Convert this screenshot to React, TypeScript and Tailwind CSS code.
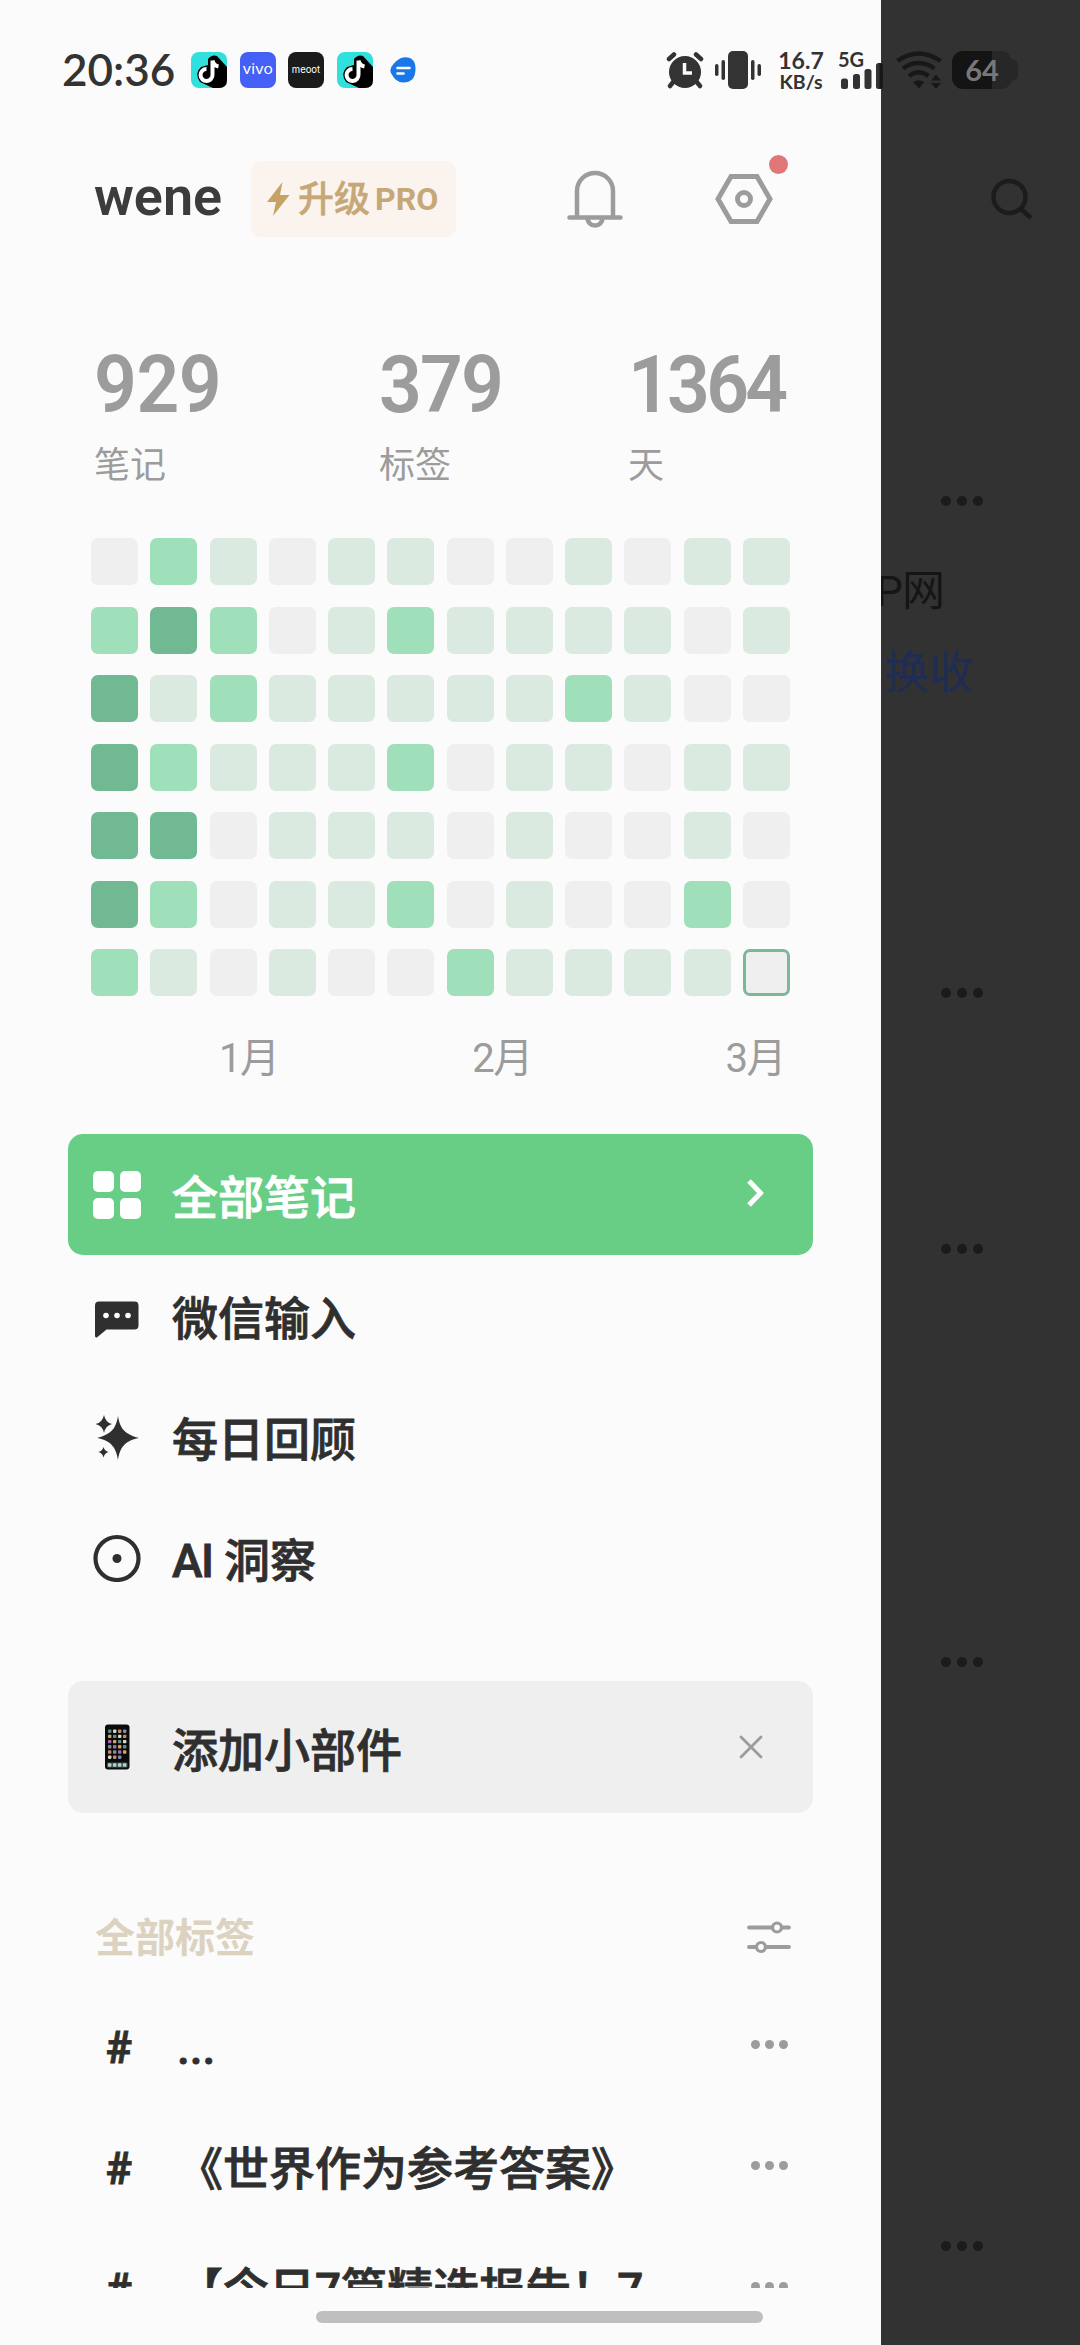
import type { ReactNode } from 'react';

// ── Data ──────────────────────────────────────────────────────────────

const STATS = [
  { value: '929', label: '笔记', className: 'w-[285px] tracking-[-0.5px]' },
  { value: '379', label: '标签', className: 'w-[249px] tracking-[-2px]' },
  { value: '1364', label: '天', className: 'tracking-[-4px]' },
];

// 0 = no notes, 3 = most notes, 4 = today
const HEATMAP = [
  [0, 2, 1, 0, 1, 1, 0, 0, 1, 0, 1, 1],
  [2, 3, 2, 0, 1, 2, 1, 1, 1, 1, 0, 1],
  [3, 1, 2, 1, 1, 1, 1, 1, 2, 1, 0, 0],
  [3, 2, 1, 1, 1, 2, 0, 1, 1, 0, 1, 1],
  [3, 3, 0, 1, 1, 1, 0, 1, 0, 0, 1, 0],
  [3, 2, 0, 1, 1, 2, 0, 1, 0, 0, 2, 0],
  [2, 1, 0, 1, 0, 0, 2, 1, 1, 1, 1, 4],
];

const LEVEL_CLASS = [
  'bg-[#efefef]',
  'bg-[#daeae0]',
  'bg-[#9fdfba]',
  'bg-[#71b993]',
  'bg-[#efefef] border-[3px] border-[#7fb699]',
];

const TAGS = ['...', '《世界作为参考答案》', '【今日7篇精选报告！7'];

// ── Icons ─────────────────────────────────────────────────────────────

function DouyinIcon() {
  return (
    <svg viewBox="0 0 36 36" className="h-9 w-9">
      <rect width="36" height="36" rx="8" fill="#2fe0dc" />
      <path d="M17 7 Q21 2 26 4 L36 15 V28 Q36 36 28 36 H22 L9 30 Q3 21 10 15 L17 13 Z" fill="#000" />
      <path
        d="M21.5 8.5 V22.5 A6 6 0 1 1 15.5 17 M21.5 8.5 Q22.5 13.5 27.5 14.5"
        fill="none"
        stroke="#fff"
        strokeWidth="4"
      />
    </svg>
  );
}

function AlarmIcon() {
  return (
    <svg viewBox="0 0 38 38" className="h-[38px] w-[38px]">
      <g stroke="#333" strokeWidth="4.5" strokeLinecap="round">
        <path d="M3 8 L8 3.500" />
        <path d="M35 8 L30 3.500" />
        <path d="M8 30 L4 35" />
        <path d="M30 30 L34 35" />
      </g>
      <circle cx="19" cy="21" r="16" fill="#333" />
      <path d="M18.500 12 V22 H26" fill="none" stroke="#fafafa" strokeWidth="3.500" />
    </svg>
  );
}

function VibrateIcon() {
  return (
    <svg viewBox="0 0 46 38" className="h-[38px] w-[46px]" fill="#333">
      <rect x="13" y="0" width="20" height="38" rx="5" />
      <rect x="6.500" y="9" width="3.500" height="20" rx="1.700" />
      <rect x="0" y="13" width="3.500" height="12" rx="1.700" />
      <rect x="36" y="9" width="3.500" height="20" rx="1.700" />
      <rect x="42.500" y="13" width="3.500" height="12" rx="1.700" />
    </svg>
  );
}

function SignalIcon() {
  return (
    <svg viewBox="0 0 42 26" className="h-[26px] w-[42px]" fill="#333">
      <rect x="0" y="15.500" width="7" height="10.500" rx="2.500" />
      <rect x="12" y="11" width="7" height="15" rx="2.500" />
      <rect x="23.500" y="6" width="7" height="20" rx="2.500" />
      <rect x="35" y="0" width="7" height="26" rx="2.500" />
      <path d="M38.500 0 Q42 0 42 3 V23 Q42 26 38.500 26 Z" fill="#181818" />
    </svg>
  );
}

function WifiIcon() {
  return (
    <svg viewBox="0 0 46 38" className="h-[38px] w-[46px]">
      <g fill="none" stroke="#181818" strokeWidth="4.500">
        <path d="M1.500 10 Q22.500 -5 44.500 10" />
        <path d="M7 17.500 Q22.500 6.500 38.500 17.500" />
        <path d="M13 25 Q22.500 17.500 32.500 25" />
      </g>
      <path d="M17 31 Q22.500 27.500 28.500 31 L23 37.500 Z" fill="#181818" />
      <path d="M35 29.500 L40 23.500 L45 29.500 Z M35 32 L40 38 L45 32 Z" fill="#181818" />
    </svg>
  );
}

function BellIcon() {
  return (
    <svg viewBox="0 0 56 58" className="h-[58px] w-14" fill="none" stroke="#9c9c9c" strokeWidth="4.500">
      <path d="M10 46 V21 A18 18 0 0 1 46 21 V46" />
      <path d="M2.500 47.500 H53.500" strokeLinecap="round" />
      <path d="M20.500 48 A7.500 7.500 0 0 0 35.500 48" />
    </svg>
  );
}

function SettingsIcon() {
  return (
    <svg viewBox="0 0 58 50" className="h-[50px] w-[58px]" fill="none" stroke="#9c9c9c" strokeWidth="5">
      <path d="M16 2.500 H42 L55 25 L42 47.500 H16 L3 25 Z" />
      <circle cx="29" cy="25" r="6.500" />
    </svg>
  );
}

function GridIcon() {
  return (
    <svg viewBox="0 0 48 48" className="h-12 w-12" fill="#fff">
      <rect x="0" y="0" width="21" height="21" rx="5" />
      <rect x="27" y="0" width="21" height="21" rx="5" />
      <rect x="0" y="27" width="21" height="21" rx="5" />
      <rect x="27" y="27" width="21" height="21" rx="5" />
    </svg>
  );
}

function ChatIcon() {
  return (
    <svg viewBox="0 0 48 48" className="h-12 w-12">
      <path d="M6 9.500 H41.500 Q45.500 9.500 45.500 13.500 V33.500 Q45.500 37.500 41.500 37.500 H13.500 L4.500 45 Q2 46.500 2 43.500 V13.500 Q2 9.500 6 9.500 Z" fill="#2f2f2f" />
      <circle cx="13" cy="23.500" r="2.800" fill="#fff" />
      <circle cx="24" cy="23.500" r="2.800" fill="#fff" />
      <circle cx="35" cy="23.500" r="2.800" fill="#fff" />
    </svg>
  );
}

function SparkleIcon() {
  return (
    <svg viewBox="0 0 48 48" className="h-12 w-12" fill="#2f2f2f">
      <path d="M25 3 C27 15 31 21 46 25 C31 28 27 35 25 47 C23 35 19 28 4 25 C19 21 23 15 25 3 Z" />
      <path d="M11 2 Q12.500 9.500 19 11 Q12.500 12.500 11 20 Q9.500 12.500 2.500 11 Q9.500 9.500 11 2 Z" />
      <path d="M10.500 34 Q11.500 38 15.500 39 Q11.500 40 10.500 44.500 Q9.500 40 5.500 39 Q9.500 38 10.500 34 Z" />
    </svg>
  );
}

function InsightIcon() {
  return (
    <svg viewBox="0 0 48 48" className="h-12 w-12">
      <circle cx="24" cy="24.500" r="21.500" fill="none" stroke="#2f2f2f" strokeWidth="4.200" />
      <circle cx="24" cy="24.500" r="4.500" fill="#2f2f2f" />
    </svg>
  );
}

const APP_COLORS = ['#5f8f93', '#d8d8c8', '#c58a6a', '#7d8fb0', '#a56aa8', '#d9a35e'];

function PhoneIcon() {
  return (
    <svg viewBox="0 0 48 48" className="h-12 w-12">
      <rect x="12" y="1.500" width="24.500" height="45" rx="3" fill="#0b0b0b" />
      {[0, 1, 2, 3, 4, 5].map((row) =>
        [0, 1, 2, 3].map((col) =>
          row === 5 && col === 3 ? null : (
            <rect
              key={`${row}-${col}`}
              x={15 + col * 5}
              y={6.5 + row * 5.2}
              width="3.400"
              height="3.400"
              rx="0.800"
              fill={APP_COLORS[(row * 5 + col) % 6]}
            />
          ),
        ),
      )}
      <rect x="14" y="39.500" width="20.500" height="5" rx="1" fill="#3c5a56" />
      {[0, 1, 2, 3].map((col) => (
        <rect key={col} x={15 + col * 5} y="40.300" width="3.400" height="3.400" rx="0.800" fill="#b9cfc8" />
      ))}
    </svg>
  );
}

function SlidersIcon() {
  return (
    <svg viewBox="0 0 44 34" className="h-[34px] w-11" fill="none" stroke="#9c9c9c" strokeWidth="3.800" strokeLinecap="round">
      <path d="M2 7.500 H25 M35 7.500 H42" />
      <path d="M2 27 H9 M19 27 H42" />
      <circle cx="30" cy="7.500" r="4.500" strokeWidth="3.200" />
      <circle cx="14" cy="27" r="4.500" strokeWidth="3.200" />
    </svg>
  );
}

function MoreDots() {
  return (
    <div className="flex gap-[5px]">
      <span className="h-[9px] w-[9px] rounded-full bg-[#9c9c9c]" />
      <span className="h-[9px] w-[9px] rounded-full bg-[#9c9c9c]" />
      <span className="h-[9px] w-[9px] rounded-full bg-[#9c9c9c]" />
    </div>
  );
}

// ── Status bar ────────────────────────────────────────────────────────

function StatusBar() {
  return (
    <div className="absolute inset-x-0 top-0 z-10 flex h-[140px] items-center font-['Lato']">
      <span className="ml-[62px] w-[129px] pb-[3px] text-[44px] leading-none font-semibold text-[#333]">20:36</span>
      <div className="flex items-center gap-[12.5px]">
        <DouyinIcon />
        <div className="flex h-9 w-9 items-center justify-center rounded-lg bg-[#4460f5] font-['Inter'] text-[13px] text-white">
          <span className="scale-x-120">vivo</span>
        </div>
        <div className="flex h-9 w-9 items-center justify-center rounded-lg bg-[#1b1b1b] font-['Inter'] text-[9.5px] text-white">
          meoot
        </div>
        <DouyinIcon />
        <svg viewBox="0 0 26 26" className="ml-[5px] h-[26px] w-[26px]">
          <path d="M13 0.500 Q25.500 -1 25.500 12 Q25.500 25.500 13 25.500 Q6 25.500 1.500 17 Q-1.500 12 3.500 7 Q8 1.500 13 0.500 Z" fill="#1a77ea" />
          <path d="M7.500 11 H19.500 M7.500 16.500 H13.500" stroke="#fff" strokeWidth="2.600" strokeLinecap="round" />
        </svg>
      </div>
      <div className="ml-[250px] flex items-center">
        <AlarmIcon />
        <div className="ml-[11px]">
          <VibrateIcon />
        </div>
        <div className="ml-[15px] w-[50px] text-center font-bold text-[#333]">
          <p className="text-[23px] leading-[18px]">16.7</p>
          <p className="mt-[5px] text-[19.5px] leading-[16px]">KB/s</p>
        </div>
        <div className="ml-[12px] w-[46px] text-[#333]">
          <p className="h-[12px] text-[20px] leading-[16px] font-bold">5G</p>
          <div className="ml-[3px]">
            <SignalIcon />
          </div>
        </div>
        <div className="ml-[12px]">
          <WifiIcon />
        </div>
        <div className="ml-[10px] flex h-[38px] w-[67px] items-center">
          <div className="flex h-full w-[60px] items-center justify-center rounded-[11px] bg-linear-to-r from-[#141414] from-66% to-[#272727] to-66% pb-[2px] text-[29px] leading-none font-bold text-[#777]">
            64
          </div>
          <span className="h-[22px] w-[6px] rounded-r-full bg-[#272727]" />
        </div>
      </div>
    </div>
  );
}

// ── Drawer pieces ─────────────────────────────────────────────────────

function Header() {
  return (
    <div className="mt-[161px] flex h-[76px] items-center pl-[94px]">
      <h1 className="w-[157px] pb-[5px] text-[54px] leading-none font-semibold text-[#3c3c3c]">wene</h1>
      <div className="flex h-[76px] w-[205px] items-center rounded-[10px] bg-[#fbf3ee] pl-[15px] text-[#c6a777]">
        <svg viewBox="0 0 24 34" className="h-[34px] w-6" fill="#c6a264">
          <path d="M16.500 0 L1 20 H10 L7 34 L23.500 13 H14 Z" />
        </svg>
        <span className="ml-[8px] pt-[2px] text-[36px] leading-none font-medium [-webkit-text-stroke:0.5px]">升级</span>
        <span className="ml-[5px] text-[32px] leading-none font-bold">PRO</span>
      </div>
      <div className="ml-[111px]">
        <BellIcon />
      </div>
      <div className="relative ml-[92px]">
        <SettingsIcon />
        <span className="absolute -top-[19px] left-[54px] h-[19px] w-[19px] rounded-full bg-[#e07676]" />
      </div>
    </div>
  );
}

function Heatmap() {
  return (
    <div className="mt-[48px] ml-[91px] w-[699px]">
      <div className="flex h-[458px] flex-col justify-between">
        {HEATMAP.map((row, y) => (
          <div key={y} className="flex justify-between">
            {row.map((level, x) => (
              <span key={x} className={`h-[47px] w-[47px] rounded-[7px] ${LEVEL_CLASS[level]}`} />
            ))}
          </div>
        ))}
      </div>
      <div className="mt-[39px] flex justify-between pr-[5px] pl-[128px] text-[40px] leading-[48px] tracking-[-1.5px] text-[#9c9c9c]">
        <span>1月</span>
        <span>2月</span>
        <span>3月</span>
      </div>
    </div>
  );
}

function NavItem({ icon, label, active }: { icon: ReactNode; label: ReactNode; active?: boolean }) {
  return (
    <div
      className={`flex h-[121px] items-center rounded-[15px] pl-[25px] text-[46px] leading-none font-medium [-webkit-text-stroke:0.8px] ${
        active ? 'bg-[#68ce86] text-white' : 'text-[#2f2f2f]'
      }`}
    >
      {icon}
      <span className="ml-[31px] flex-1 pt-[7px]">{label}</span>
      {active && (
        <svg viewBox="0 0 18 30" className="mr-[49px] mb-[3px] h-[30px] w-[18px]" fill="none" stroke="#fff" strokeWidth="5">
          <path d="M3 3 L14.500 15 L3 27" />
        </svg>
      )}
    </div>
  );
}

function TagRow({ label }: { label: string }) {
  return (
    <div className="flex h-[121px] items-center pr-[93px] pl-[106px] text-[46px] leading-none font-medium text-[#2f2f2f] [-webkit-text-stroke:0.8px]">
      <span className="w-[71px] pt-[7px] text-[44px] font-bold">#</span>
      <span className="flex-1 pt-[7px] whitespace-nowrap">{label}</span>
      <MoreDots />
    </div>
  );
}

// Notes page dimmed behind the drawer
function DimmedPage() {
  return (
    <div className="relative flex-1 overflow-hidden bg-[#323232] text-[43px] leading-none">
      <svg viewBox="0 0 42 42" className="absolute top-[178px] left-[110px] h-[42px] w-[42px]" fill="none" stroke="#1c1c1c" strokeWidth="4.500">
        <circle cx="18.500" cy="19" r="16" />
        <path d="M30 31 L40 40" />
      </svg>
      <span className="absolute top-[570px] right-[136px] tracking-[-1px] whitespace-nowrap text-[#151515]">P网</span>
      <span className="absolute top-[651px] left-[3px] text-[45px] text-[#1f2c55]">换收</span>
      {['top-[496px]', 'top-[988px]', 'top-[1244px]', 'top-[1657px]', 'top-[2241px]'].map((top) => (
        <div key={top} className={`absolute left-[60px] flex gap-[6px] ${top}`}>
          <span className="h-[10px] w-[10px] rounded-full bg-[#1b1b1b]" />
          <span className="h-[10px] w-[10px] rounded-full bg-[#1b1b1b]" />
          <span className="h-[10px] w-[10px] rounded-full bg-[#1b1b1b]" />
        </div>
      ))}
    </div>
  );
}

// ── App ───────────────────────────────────────────────────────────────

export default function App() {
  return (
    <div className="relative flex h-[2345px] w-[1080px] overflow-hidden bg-[#fbfbfb] font-['Roboto','Noto_Sans_CJK_SC',sans-serif]">
      <StatusBar />

      <aside className="flex w-[881px] flex-col">
        <Header />

        <div className="mt-[109px] flex pl-[94px] text-[#9c9c9c]">
          {STATS.map((s) => (
            <div key={s.label} className={s.className}>
              <p className="origin-left scale-x-95 text-[79px] leading-[78px] font-semibold">{s.value}</p>
              <p className="mt-[18px] text-[36px] leading-[48px] tracking-normal">{s.label}</p>
            </div>
          ))}
        </div>

        <Heatmap />

        <nav className="mt-[51px] ml-[68px] w-[745px]">
          <NavItem icon={<GridIcon />} label="全部笔记" active />
          <NavItem icon={<ChatIcon />} label="微信输入" />
          <NavItem icon={<SparkleIcon />} label="每日回顾" />
          <NavItem icon={<InsightIcon />} label={<><span className="tracking-[-1.5px]">AI</span> 洞察</>} />
        </nav>

        <div className="mt-[63px] ml-[68px] flex h-[132px] w-[745px] items-center rounded-[15px] bg-[#efefef] pl-[25px] text-[46px] leading-none font-medium text-[#2f2f2f] [-webkit-text-stroke:0.8px]">
          <PhoneIcon />
          <span className="ml-[31px] flex-1 pt-[7px]">添加小部件</span>
          <svg viewBox="0 0 24 24" className="mr-[50px] h-6 w-6" fill="none" stroke="#9c9c9c" strokeWidth="2.800" strokeLinecap="round">
            <path d="M2 2 L22 22 M22 2 L2 22" />
          </svg>
        </div>

        <div className="mt-24 flex h-14 items-center justify-between pr-[90px] pl-[95px]">
          <span className="pt-[4px] text-[40px] leading-none font-bold text-[#dbd3c0]">全部标签</span>
          <SlidersIcon />
        </div>

        <div className="mt-[19px] h-[304px] overflow-hidden">
          {TAGS.map((t) => (
            <TagRow key={t} label={t} />
          ))}
        </div>
      </aside>

      <DimmedPage />

      {/* Home indicator */}
      <div className="absolute top-[2311px] left-[316px] h-3 w-[447px] rounded-full bg-[#bfbfbf]" />
    </div>
  );
}
